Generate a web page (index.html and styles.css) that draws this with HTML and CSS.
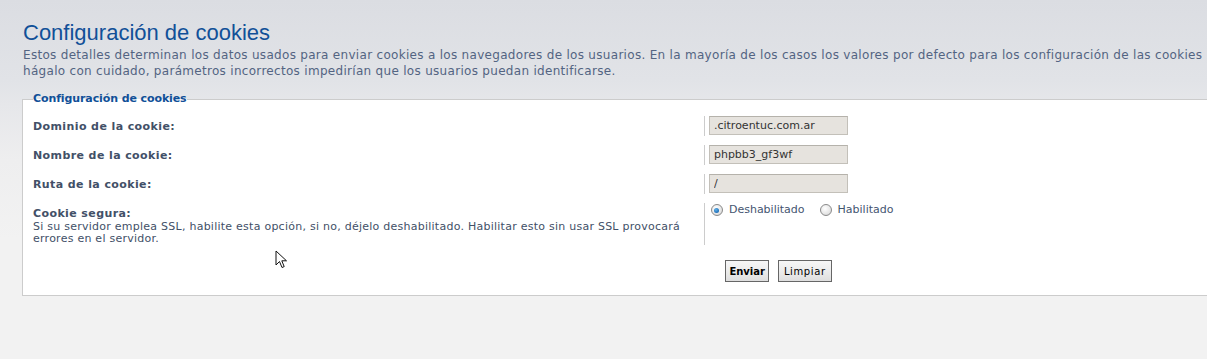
FILE: index.html
```html
<!DOCTYPE html>
<html lang="es">
<head>
<meta charset="utf-8">
<title>Configuración de cookies</title>
<link rel="stylesheet" href="styles.css">
</head>
<body>
<div class="page">
  <h1 class="title">Configuración de cookies</h1>
  <p class="intro">Estos detalles determinan los datos usados para enviar cookies a los navegadores de los usuarios. En la mayoría de los casos los valores por defecto para los configuración de las cookies<br>hágalo con cuidado, parámetros incorrectos impedirían que los usuarios puedan identificarse.</p>

  <form class="form">
    <fieldset class="box">
      <legend class="legend">Configuración de cookies</legend>

      <div class="row">
        <div class="label-cell"><label class="label" for="d">Dominio de la cookie:</label></div>
        <div class="field-cell"><input class="text" id="d" type="text" value=".citroentuc.com.ar"></div>
      </div>
      <div class="row">
        <div class="label-cell"><label class="label" for="n">Nombre de la cookie:</label></div>
        <div class="field-cell"><input class="text" id="n" type="text" value="phpbb3_gf3wf"></div>
      </div>
      <div class="row">
        <div class="label-cell"><label class="label" for="r">Ruta de la cookie:</label></div>
        <div class="field-cell"><input class="text" id="r" type="text" value="/"></div>
      </div>
      <div class="row">
        <div class="label-cell tall">
          <label class="label">Cookie segura:</label>
          <span class="explain">Si su servidor emplea SSL, habilite esta opción, si no, déjelo deshabilitado. Habilitar esto sin usar SSL provocará<br>errores en el servidor.</span>
        </div>
        <div class="field-cell">
          <div class="radios">
            <label class="radio"><span class="dot on"></span>Deshabilitado</label>
            <label class="radio"><span class="dot"></span>Habilitado</label>
          </div>
        </div>
      </div>

      <div class="buttons">
        <button class="btn bold" type="button">Enviar</button>
        <button class="btn" type="button">Limpiar</button>
      </div>
    </fieldset>
  </form>
</div>
<svg class="cursor" width="14" height="20" viewBox="0 0 14 20" aria-hidden="true">
  <path d="M1 1 L1 15 L4.5 11.5 L7 17.5 L9.2 16.6 L6.8 10.8 L11.5 10.8 Z" fill="#fff" stroke="#111" stroke-width="1" stroke-linejoin="miter"/>
</svg>
</body>
</html>
```
FILE: styles.css
```css
html, body {
  margin: 0;
  padding: 0;
  overflow: hidden;
}
body {
  height: 359px;
  background: linear-gradient(180deg, #dbdde2 0px, #e1e3e7 80px, #e6e7ea 105px, #eeeeef 160px, #f2f2f2 240px);
  font-family: "DejaVu Sans", Verdana, sans-serif;
  font-size: 11px;
  color: #536482;
  position: relative;
}
.page {
  width: 1513px;
  margin-left: 22px;
  padding-top: 19px;
}
.title {
  margin: 0 0 0 1px;
  font-family: "Liberation Sans", Arial, sans-serif;
  font-weight: normal;
  font-size: 22px;
  line-height: 28px;
  color: #115098;
}
.intro {
  margin: 0 0 0 1px;
  font-size: 12px;
  letter-spacing: 0.3px;
  line-height: 16px;
  white-space: nowrap;
  color: #536482;
}
.form {
  margin: 13px 0 0 0;
}
.box {
  margin: 0;
  padding: 10px;
  border: 1px solid #cccccc;
  background: #ffffff;
  min-width: 0;
}
.legend {
  padding: 0;
  font-weight: bold;
  font-size: 11px;
  letter-spacing: -0.1px;
  line-height: 14px;
  color: #115098;
}
.row {
  display: flex;
  align-items: stretch;
  padding: 0 0 9px 0;
}
.label-cell {
  width: 45%;
  padding-top: 4px;
  display: flex;
  flex-direction: column;
}
.label {
  font-weight: bold;
  letter-spacing: 0.4px;
  color: #425067;
  line-height: 14px;
}
.explain {
  color: #425067;
  letter-spacing: 0.25px;
  line-height: 12px;
}
.field-cell {
  flex: 1;
  border-left: 1px solid #cccccc;
  padding-left: 4px;
  min-height: 20px;
}
.text {
  box-sizing: border-box;
  width: 139px;
  height: 19px;
  margin: 0;
  padding: 0 4px;
  border: 1px solid #c3c0b9;
  border-top-color: #b5b2ab;
  background: #e6e3de;
  font-family: "DejaVu Sans", Verdana, sans-serif;
  font-size: 11px;
  color: #333333;
}
.radios {
  display: flex;
  gap: 15px;
  padding-left: 2px;
  line-height: 14px;
}
.radio {
  display: flex;
  align-items: center;
  gap: 6px;
  font-size: 11px;
  color: #445570;
}
.dot {
  width: 10px;
  height: 10px;
  border-radius: 50%;
  border: 1px solid #8a8a8a;
  background: radial-gradient(circle at 40% 35%, #ffffff 0, #e6e6e6 60%, #c9c9c9 100%);
  position: relative;
}
.dot.on::after {
  content: "";
  position: absolute;
  left: 2.5px;
  top: 2.5px;
  width: 5px;
  height: 5px;
  border-radius: 50%;
  background: radial-gradient(circle at 40% 35%, #5fb1e8 0, #1f6fb8 70%, #0d4f8e 100%);
}
.buttons {
  display: flex;
  justify-content: center;
  gap: 9px;
  padding: 6px 0 3px 0;
}
.btn {
  box-sizing: border-box;
  height: 22px;
  padding: 0 5px;
  border: 1px solid #666666;
  background: linear-gradient(180deg, #f6f6f6 0, #ececec 50%, #dedede 100%);
  font-family: "DejaVu Sans", Verdana, sans-serif;
  font-size: 10px;
  color: #000000;
  letter-spacing: 0.6px;
}
.btn.bold {
  font-weight: bold;
  letter-spacing: 0;
  padding: 0 3px;
}
.cursor {
  position: absolute;
  left: 275px;
  top: 250px;
}
```
